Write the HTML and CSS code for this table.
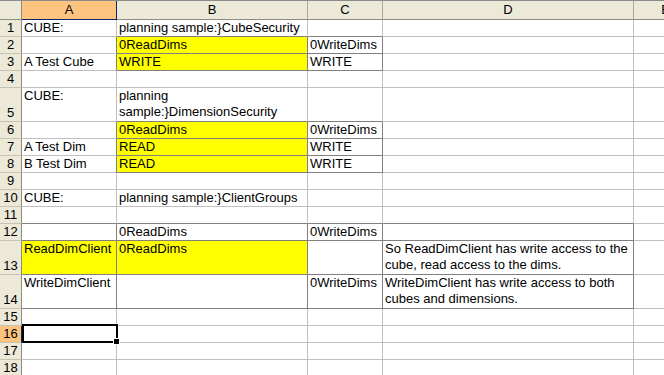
FILE: index.html
```html
<!DOCTYPE html>
<html lang="en">
<head>
<meta charset="utf-8">
<title>Security sheet</title>
<link rel="stylesheet" href="styles.css">
</head>
<body>
<div class="sheet">
  <div class="row head">
    <div class="hc corner"></div>
    <div class="hc col active-col">A</div>
    <div class="hc col">B</div>
    <div class="hc col">C</div>
    <div class="hc col">D</div>
    <div class="hc col">E</div>
  </div>

  <div class="row">
    <div class="rh">1</div>
    <div class="c">CUBE:</div>
    <div class="c db">planning sample:}CubeSecurity</div>
    <div class="c db"></div>
    <div class="c"></div>
    <div class="c"></div>
  </div>
  <div class="row">
    <div class="rh">2</div>
    <div class="c dr"></div>
    <div class="c yl db dr">0ReadDims</div>
    <div class="c db dr">0WriteDims</div>
    <div class="c"></div>
    <div class="c"></div>
  </div>
  <div class="row">
    <div class="rh">3</div>
    <div class="c dr">A Test Cube</div>
    <div class="c yl db dr">WRITE</div>
    <div class="c db dr">WRITE</div>
    <div class="c"></div>
    <div class="c"></div>
  </div>
  <div class="row">
    <div class="rh">4</div>
    <div class="c"></div>
    <div class="c"></div>
    <div class="c"></div>
    <div class="c"></div>
    <div class="c"></div>
  </div>
  <div class="row tall">
    <div class="rh">5</div>
    <div class="c">CUBE:</div>
    <div class="c db wrap">planning sample:}DimensionSecurity</div>
    <div class="c db"></div>
    <div class="c"></div>
    <div class="c"></div>
  </div>
  <div class="row">
    <div class="rh">6</div>
    <div class="c dr"></div>
    <div class="c yl db dr">0ReadDims</div>
    <div class="c db dr">0WriteDims</div>
    <div class="c"></div>
    <div class="c"></div>
  </div>
  <div class="row">
    <div class="rh">7</div>
    <div class="c dr">A Test Dim</div>
    <div class="c yl db dr">READ</div>
    <div class="c db dr">WRITE</div>
    <div class="c"></div>
    <div class="c"></div>
  </div>
  <div class="row">
    <div class="rh">8</div>
    <div class="c dr">B Test Dim</div>
    <div class="c yl db dr">READ</div>
    <div class="c db dr">WRITE</div>
    <div class="c"></div>
    <div class="c"></div>
  </div>
  <div class="row">
    <div class="rh">9</div>
    <div class="c"></div>
    <div class="c"></div>
    <div class="c"></div>
    <div class="c"></div>
    <div class="c"></div>
  </div>
  <div class="row">
    <div class="rh">10</div>
    <div class="c">CUBE:</div>
    <div class="c">planning sample:}ClientGroups</div>
    <div class="c"></div>
    <div class="c"></div>
    <div class="c"></div>
  </div>
  <div class="row">
    <div class="rh">11</div>
    <div class="c db"></div>
    <div class="c db"></div>
    <div class="c db"></div>
    <div class="c db"></div>
    <div class="c"></div>
  </div>
  <div class="row">
    <div class="rh">12</div>
    <div class="c db dr"></div>
    <div class="c db dr">0ReadDims</div>
    <div class="c db dr">0WriteDims</div>
    <div class="c db dr"></div>
    <div class="c"></div>
  </div>
  <div class="row tall">
    <div class="rh">13</div>
    <div class="c yl db dr">ReadDimClient</div>
    <div class="c yl db dr">0ReadDims</div>
    <div class="c db dr"></div>
    <div class="c db dr lines">So ReadDimClient has write access to the<br>cube, read access to the dims.</div>
    <div class="c"></div>
  </div>
  <div class="row tall">
    <div class="rh">14</div>
    <div class="c db dr">WriteDimClient</div>
    <div class="c db dr"></div>
    <div class="c db dr">0WriteDims</div>
    <div class="c db dr lines">WriteDimClient has write access to both<br>cubes and dimensions.</div>
    <div class="c"></div>
  </div>
  <div class="row">
    <div class="rh">15</div>
    <div class="c"></div>
    <div class="c"></div>
    <div class="c"></div>
    <div class="c"></div>
    <div class="c"></div>
  </div>
  <div class="row">
    <div class="rh active-row">16</div>
    <div class="c current"><span class="cursor"><span class="handle"></span></span></div>
    <div class="c"></div>
    <div class="c"></div>
    <div class="c"></div>
    <div class="c"></div>
  </div>
  <div class="row">
    <div class="rh">17</div>
    <div class="c"></div>
    <div class="c"></div>
    <div class="c"></div>
    <div class="c"></div>
    <div class="c"></div>
  </div>
  <div class="row">
    <div class="rh">18</div>
    <div class="c"></div>
    <div class="c"></div>
    <div class="c"></div>
    <div class="c"></div>
    <div class="c"></div>
  </div>
</div>
</body>
</html>
```

FILE: styles.css
```css
html, body {
  margin: 0;
  padding: 0;
  background: #fff;
  overflow: hidden;
}

.sheet {
  width: 664px;
  height: 375px;
  overflow: hidden;
  font-family: "Liberation Sans", Arial, sans-serif;
  font-size: 13px;
  line-height: 16px;
  color: #000;
}

/* every row shares the same column track sizes */
.row {
  display: grid;
  grid-template-columns: 22px 95px 191px 75px 251px 64px;
  height: 17px;
}

.row.tall {
  height: 34px;
}

.row.head {
  height: 20px;
  border-top: 1px solid #8a8a8a;
  box-sizing: border-box;
}

/* column header strip */
.hc {
  background: #ece9d8;
  border-right: 1px solid #aca899;
  border-bottom: 1px solid #8d8b80;
  box-sizing: border-box;
  text-align: center;
  line-height: 18px;
}

.hc.corner {
  border-right-color: #8d8b80;
}

.hc.active-col {
  background: #fcc47f;
  border-right-color: #0a246a;
  border-bottom-color: #0a246a;
}

/* row number strip */
.rh {
  background: #ece9d8;
  border-right: 1px solid #8d8b80;
  border-bottom: 1px solid #c6c3b2;
  box-sizing: border-box;
  display: flex;
  align-items: flex-end;
  justify-content: center;
  padding-bottom: 0;
}

.rh.active-row {
  background: #fcc47f;
  border-right-color: #0a246a;
}

/* worksheet cells */
.c {
  border-right: 1px solid #c0c0c0;
  border-bottom: 1px solid #c0c0c0;
  box-sizing: border-box;
  padding: 0 2px;
  white-space: nowrap;
  position: relative;
}

.c.wrap {
  white-space: normal;
}

.c.lines {
  white-space: nowrap;
}

.c.yl {
  background: #ffff00;
}

.c.db {
  border-bottom-color: #808080;
}

.c.dr {
  border-right-color: #808080;
}

/* active cell frame with the fill handle */
.cursor {
  position: absolute;
  left: 0;
  top: -2px;
  width: 96px;
  height: 19px;
  border: 2px solid #000;
  box-sizing: border-box;
  z-index: 2;
}

.handle {
  position: absolute;
  right: -4px;
  bottom: -4px;
  width: 5px;
  height: 5px;
  background: #000;
  border: 1px solid #fff;
}
```
